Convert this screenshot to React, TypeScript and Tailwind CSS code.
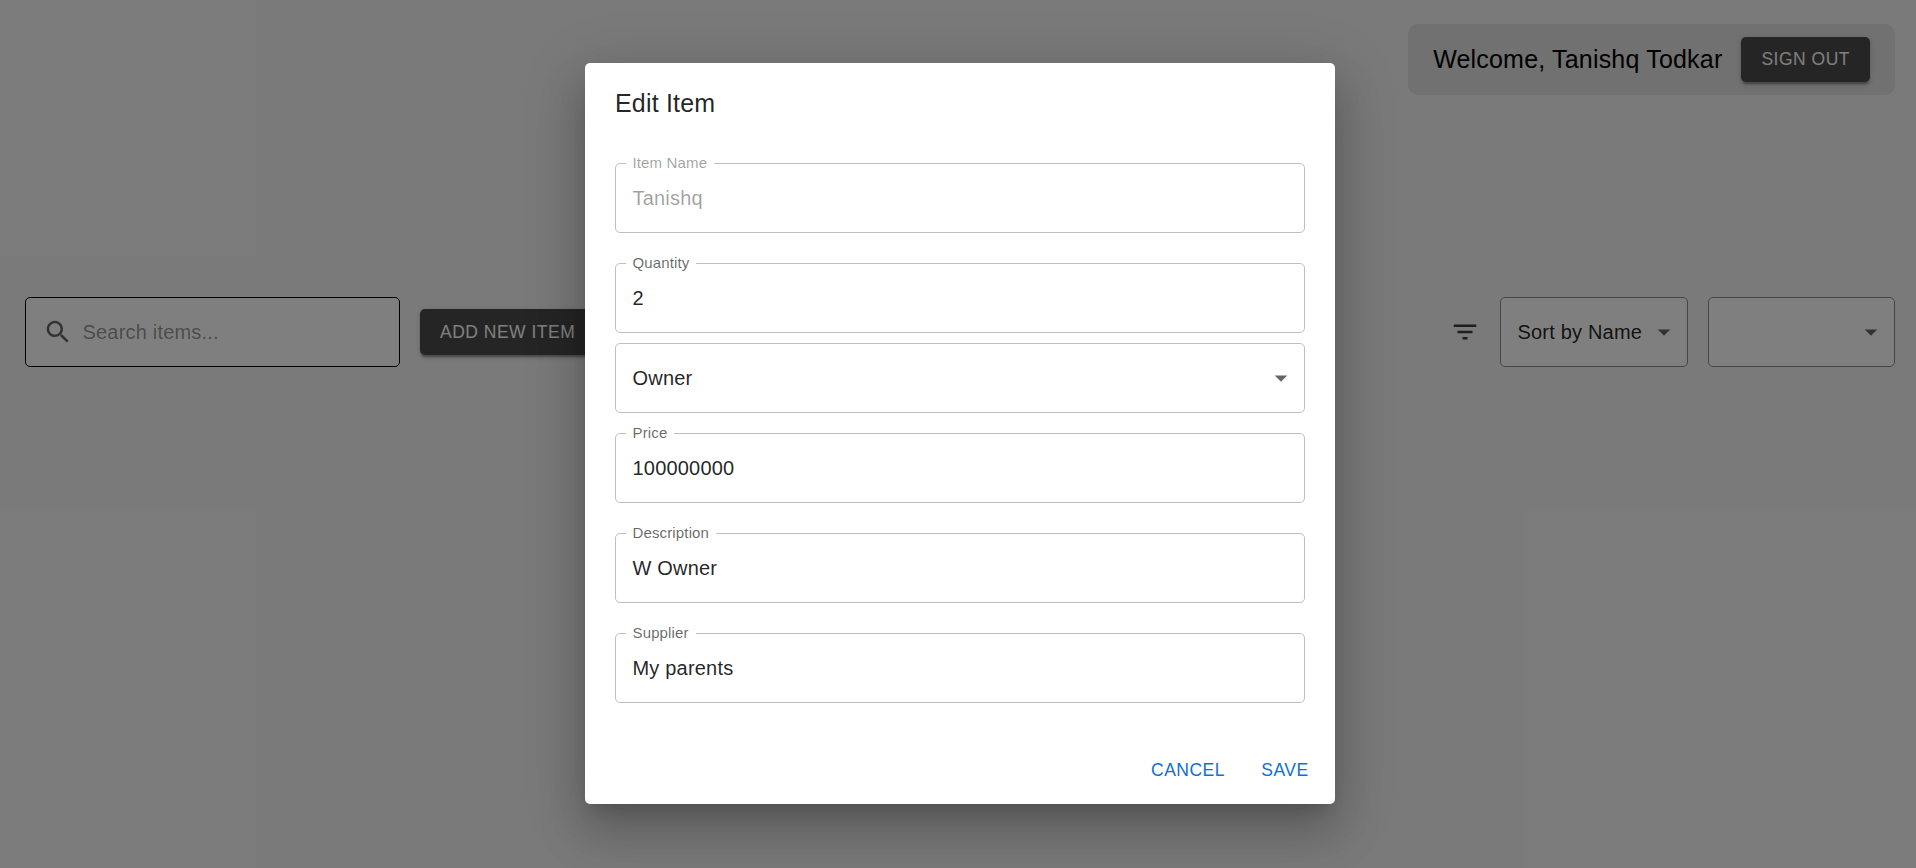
import React from "react";

const BUTTON_SHADOW =
  "shadow-[0_3.75px_1.25px_-2.5px_rgba(0,0,0,0.2),0_2.5px_2.5px_0_rgba(0,0,0,0.14),0_1.25px_6.25px_0_rgba(0,0,0,0.12)]";

function Icon({ d, className }: { d: string; className: string }) {
  return (
    <svg viewBox="0 0 24 24" className={`size-[30px] shrink-0 ${className}`} fill="currentColor" aria-hidden="true">
      <path d={d} />
    </svg>
  );
}

const SEARCH =
  "M15.5 14h-.79l-.28-.27C15.41 12.59 16 11.11 16 9.5 16 5.91 13.09 3 9.5 3S3 5.91 3 9.5 5.91 16 9.5 16c1.61 0 3.09-.59 4.23-1.57l.27.28v.79l5 4.99L20.49 19l-4.99-5zm-6 0C7.01 14 5 11.99 5 9.5S7.01 5 9.5 5 14 7.01 14 9.5 11.99 14 9.5 14z";
const FILTER = "M10 18h4v-2h-4v2zM3 6v2h18V6H3zm3 7h12v-2H6v2z";
const ARROW = "M7 10l5 5 5-5z";

function DarkButton({ children, className }: { children: React.ReactNode; className: string }) {
  return (
    <button
      className={`shrink-0 rounded-[5px] bg-[#4a4a4a] px-5 text-[17.5px] leading-[30px] tracking-[0.5px] whitespace-nowrap text-white ${BUTTON_SHADOW} ${className}`}
    >
      {children}
    </button>
  );
}

function SelectBox({ value, className }: { value: string; className: string }) {
  return (
    <div
      className={`flex h-[70px] items-center justify-between rounded-[5px] border bg-white pr-[7.75px] pl-[16.5px] ${className}`}
    >
      <span className="text-xl tracking-[0.19px] whitespace-nowrap text-black/87">{value}</span>
      <Icon d={ARROW} className="text-black/60" />
    </div>
  );
}

function Field({
  label,
  value,
  disabled = false,
}: {
  label: string;
  value: string;
  disabled?: boolean;
}) {
  return (
    <div className="relative mt-5 mb-2.5 flex h-[70px] items-center rounded-[5px] border border-[#bfbfbf] px-[16.5px]">
      <label
        className={`absolute -top-[12px] left-[10px] bg-white pr-[7px] pl-[6.5px] text-[15px] leading-[21.5px] tracking-[0.14px] ${disabled ? "text-black/38" : "text-black/60"}`}
      >
        {label}
      </label>
      <span className={`text-xl tracking-[0.19px] ${disabled ? "text-black/38" : "text-black/87"}`}>{value}</span>
    </div>
  );
}

function TextButton({ children }: { children: React.ReactNode }) {
  return (
    <button className="h-[46px] min-w-20 px-2.5 pb-0.5 text-[17.5px] leading-[30px] tracking-[0.5px] text-[#0f6fd4]">
      {children}
    </button>
  );
}

function Inventory() {
  return (
    <div className="h-full bg-[#f5f5f5] pt-6 pr-[21px] pl-[25px]">
      <header className="flex justify-end">
        <div className="flex h-[71px] items-center rounded-[10px] bg-[#e2e2e2] px-[25px]">
          <span className="mr-[19px] pb-0.5 text-[25px] leading-10 tracking-[0.19px] whitespace-nowrap text-black">
            Welcome, Tanishq Todkar
          </span>
          <DarkButton className="h-[45px] pb-px">SIGN OUT</DarkButton>
        </div>
      </header>
      <div className="mt-[202px] flex items-center justify-between">
        <div className="flex items-center gap-5">
          <div className="flex h-[70px] w-[375px] items-center gap-2.5 rounded-[5px] border border-black bg-white px-[16.5px]">
            <Icon d={SEARCH} className="text-black/60" />
            <span className="text-xl tracking-[0.19px] text-black/42">Search items...</span>
          </div>
          <DarkButton className="h-[46px] pb-px">ADD NEW ITEM</DarkButton>
        </div>
        <div className="flex items-center gap-5">
          <Icon d={FILTER} className="text-black/75" />
          <SelectBox value="Sort by Name" className="w-[187.5px] border-[#8c8c8c]" />
          <SelectBox value="" className="w-[187.5px] border-[#8c8c8c]" />
        </div>
      </div>
    </div>
  );
}

function EditDialog() {
  return (
    <div
      role="dialog"
      className="flex h-[741px] w-[750px] flex-col rounded-[5px] bg-white shadow-[0_13.75px_18.75px_-8.75px_rgba(0,0,0,0.2),0_30px_47.5px_3.75px_rgba(0,0,0,0.14),0_11.25px_57.5px_10px_rgba(0,0,0,0.12)]"
    >
      <h2 className="px-[30px] py-5 text-[25px] leading-10 tracking-[0.19px] text-black/87">Edit Item</h2>
      <div className="flex flex-1 flex-col px-[30px]">
        <Field label="Item Name" value="Tanishq" disabled />
        <Field label="Quantity" value="2" />
        <SelectBox value="Owner" className="border-[#bfbfbf]" />
        <Field label="Price" value="100000000" />
        <Field label="Description" value="W Owner" />
        <Field label="Supplier" value="My parents" />
      </div>
      <div className="flex justify-end gap-2.5 p-2.5">
        <TextButton>CANCEL</TextButton>
        <TextButton>SAVE</TextButton>
      </div>
    </div>
  );
}

export default function App() {
  return (
    <div className="relative h-[868px] w-full overflow-hidden font-['Liberation_Sans',Arial,sans-serif]">
      <Inventory />
      <div className="absolute inset-0 flex items-center justify-center bg-black/50 pb-px pl-1">
        <EditDialog />
      </div>
    </div>
  );
}
